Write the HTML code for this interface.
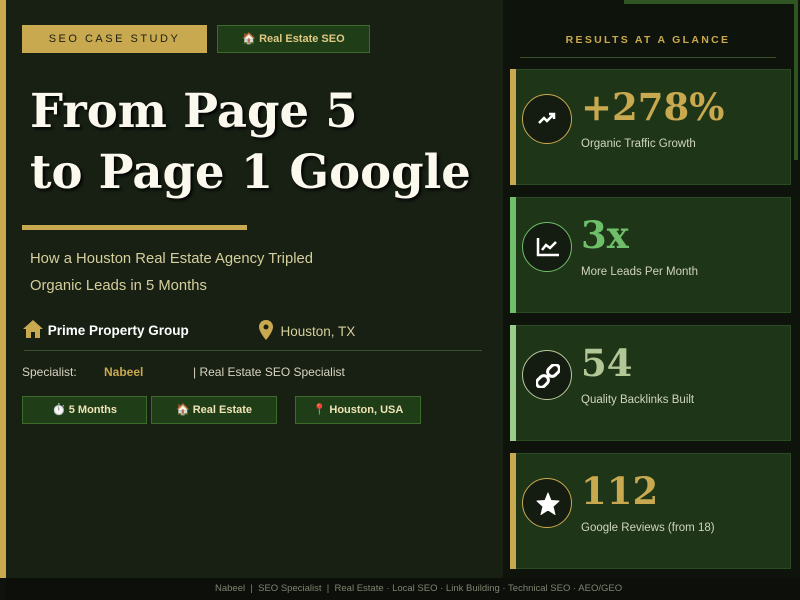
<!DOCTYPE html>
<html><head><meta charset="utf-8"><style>
*{margin:0;padding:0;box-sizing:border-box}
body{width:800px;height:600px;overflow:hidden;background:#0e130c;font-family:"Liberation Sans",sans-serif;position:relative}
.left{position:absolute;left:0;top:0;width:503px;height:578px;background:#182014}
.bar{position:absolute;left:0;top:0;width:6px;height:578px;background:#c9a94f}
.tag1{position:absolute;left:22px;top:25px;width:185px;height:28px;background:#c9a94f;color:#1a1f12;font-size:11px;letter-spacing:2.5px;text-align:center;line-height:28px}
.tag2{position:absolute;left:217px;top:25px;width:153px;height:28px;background:#1f3d17;border:1px solid #3d6b2c;color:#e0c983;font-size:11px;text-align:center;line-height:26px;font-weight:bold}
h1{position:absolute;left:30px;top:80px;font-family:"DejaVu Serif",serif;font-weight:bold;font-size:46.5px;line-height:61px;color:#fbf8ee;text-shadow:2px 2px 3px #000}
.rule{position:absolute;left:22px;top:225px;width:225px;height:5px;background:#c9a94f}
.sub{position:absolute;left:30px;top:246px;font-size:14.8px;line-height:27px;color:#d5cf9c}
.row{position:absolute;top:320px;font-size:13.5px;color:#fff;font-weight:bold}
.hr{position:absolute;left:24px;top:350px;width:458px;height:1px;background:#3b4f2e}
.spec{position:absolute;top:365px;font-size:12px;color:#d8d4c0}
.chip{position:absolute;top:396px;height:28px;background:#1f3d17;border:1px solid #3d6b2c;color:#f0e3b8;font-size:11px;font-weight:bold;text-align:center;line-height:26px}
.right-line{position:absolute;left:624px;top:0;width:172px;height:4px;background:#2e5522}
.right-v{position:absolute;left:794px;top:0;width:4px;height:160px;background:#2e5522}
.rh{position:absolute;left:520px;top:34px;width:256px;text-align:center;font-size:10.5px;letter-spacing:2.3px;color:#c9a94f;font-weight:bold}
.rhr{position:absolute;left:520px;top:57px;width:256px;height:1px;background:#3b4f2e}
.card{position:absolute;left:510px;width:281px;height:116px;background:#1e3518;border:1px solid #2c4a23}
.card .acc{position:absolute;left:-1px;top:-1px;width:6px;height:116px}
.circ{position:absolute;left:11px;top:24px;width:50px;height:50px;border-radius:50%;background:#141b10;border:1.5px solid}
.circ svg{position:absolute;left:13px;top:13px}
.num{position:absolute;left:70px;top:15px;font-family:"DejaVu Serif",serif;font-weight:bold;font-size:37px}
.lbl{position:absolute;left:70px;top:68px;font-size:11.5px;color:#d0d4bc}
.foot{position:absolute;left:6px;top:578px;width:794px;height:22px;background:#0c0f0a;color:#7d8470;font-size:9.5px;line-height:22px;padding-left:209px}
</style></head><body>
<div class="left"></div><div class="bar"></div>
<div class="tag1">SEO CASE STUDY</div>
<div class="tag2">🏠 Real Estate SEO</div>
<h1>From Page 5<br>to Page 1 Google</h1>
<div class="rule"></div>
<div class="sub">How a Houston Real Estate Agency Tripled<br>Organic Leads in 5 Months</div>
<div class="row" style="left:22px;top:319px"><svg width="22" height="20" viewBox="0 0 22 20" style="vertical-align:-4px"><path d="M11 1 L1 10 H4 V19 H9 V13 H13 V19 H18 V10 H21 Z" fill="#c9a94f"/></svg> Prime Property Group</div>
<div class="row" style="left:259px;top:320px;font-weight:normal;color:#d5cf9c"><svg width="14" height="20" viewBox="0 0 14 20" style="vertical-align:-4px"><path d="M7 0C3 0 0 3 0 7c0 5 7 13 7 13s7-8 7-13c0-4-3-7-7-7z" fill="#c9a94f"/><circle cx="7" cy="7" r="2.5" fill="#182014"/></svg> &nbsp;Houston, TX</div>
<div class="hr"></div>
<div class="spec" style="left:22px">Specialist:</div>
<div class="spec" style="left:104px;color:#c9a94f;font-weight:bold">Nabeel</div>
<div class="spec" style="left:193px">| Real Estate SEO Specialist</div>
<div class="chip" style="left:22px;width:125px">⏱️ 5 Months</div>
<div class="chip" style="left:151px;width:126px">🏠 Real Estate</div>
<div class="chip" style="left:295px;width:126px">📍 Houston, USA</div>
<div class="right-line"></div><div class="right-v"></div>
<div class="rh">RESULTS AT A GLANCE</div><div class="rhr"></div>

<div class="card" style="top:69px"><div class="acc" style="background:#c9a94f"></div>
<div class="circ" style="border-color:#c9a94f"><svg width="22" height="22" viewBox="0 0 22 22"><path d="M3 15 L8 10 L11 13 L17 7" stroke="#fff" stroke-width="2.5" fill="none"/><path d="M13 6 H18 V11" stroke="#fff" stroke-width="2.5" fill="none"/></svg></div>
<div class="num" style="color:#c9a94f">+278%</div><div class="lbl">Organic Traffic Growth</div></div>

<div class="card" style="top:197px"><div class="acc" style="background:#6fbf6a"></div>
<div class="circ" style="border-color:#6fbf6a"><svg width="24" height="22" viewBox="0 0 24 22"><path d="M2 2 V19 H23" stroke="#fff" stroke-width="2.5" fill="none"/><path d="M6 14 L10 9 L14 12 L20 6" stroke="#fff" stroke-width="2.5" fill="none"/></svg></div>
<div class="num" style="color:#6fbf6a">3x</div><div class="lbl">More Leads Per Month</div></div>

<div class="card" style="top:325px"><div class="acc" style="background:#9bcc8a"></div>
<div class="circ" style="border-color:#b8c99a"><svg width="24" height="24" viewBox="0 0 24 24"><path d="M10 14 L14 10" stroke="#fff" stroke-width="3"/><rect x="2" y="11" width="9" height="13" rx="4.5" transform="rotate(45 6.5 17.5)" stroke="#fff" stroke-width="3" fill="none"/><rect x="13" y="0" width="9" height="13" rx="4.5" transform="rotate(45 17.5 6.5)" stroke="#fff" stroke-width="3" fill="none"/></svg></div>
<div class="num" style="color:#b3c796">54</div><div class="lbl">Quality Backlinks Built</div></div>

<div class="card" style="top:453px"><div class="acc" style="background:#c9a94f"></div>
<div class="circ" style="border-color:#c9a94f"><svg width="24" height="24" viewBox="0 0 24 24"><path d="M12 1 L15 8.5 L23 9 L17 14.5 L19 22.5 L12 18 L5 22.5 L7 14.5 L1 9 L9 8.5 Z" fill="#fff" stroke="#fff" stroke-linejoin="round"/></svg></div>
<div class="num" style="color:#c9a94f">112</div><div class="lbl">Google Reviews (from 18)</div></div>

<div class="foot">Nabeel &nbsp;| &nbsp;SEO Specialist &nbsp;| &nbsp;Real Estate · Local SEO · Link Building · Technical SEO · AEO/GEO</div>
</body></html>
